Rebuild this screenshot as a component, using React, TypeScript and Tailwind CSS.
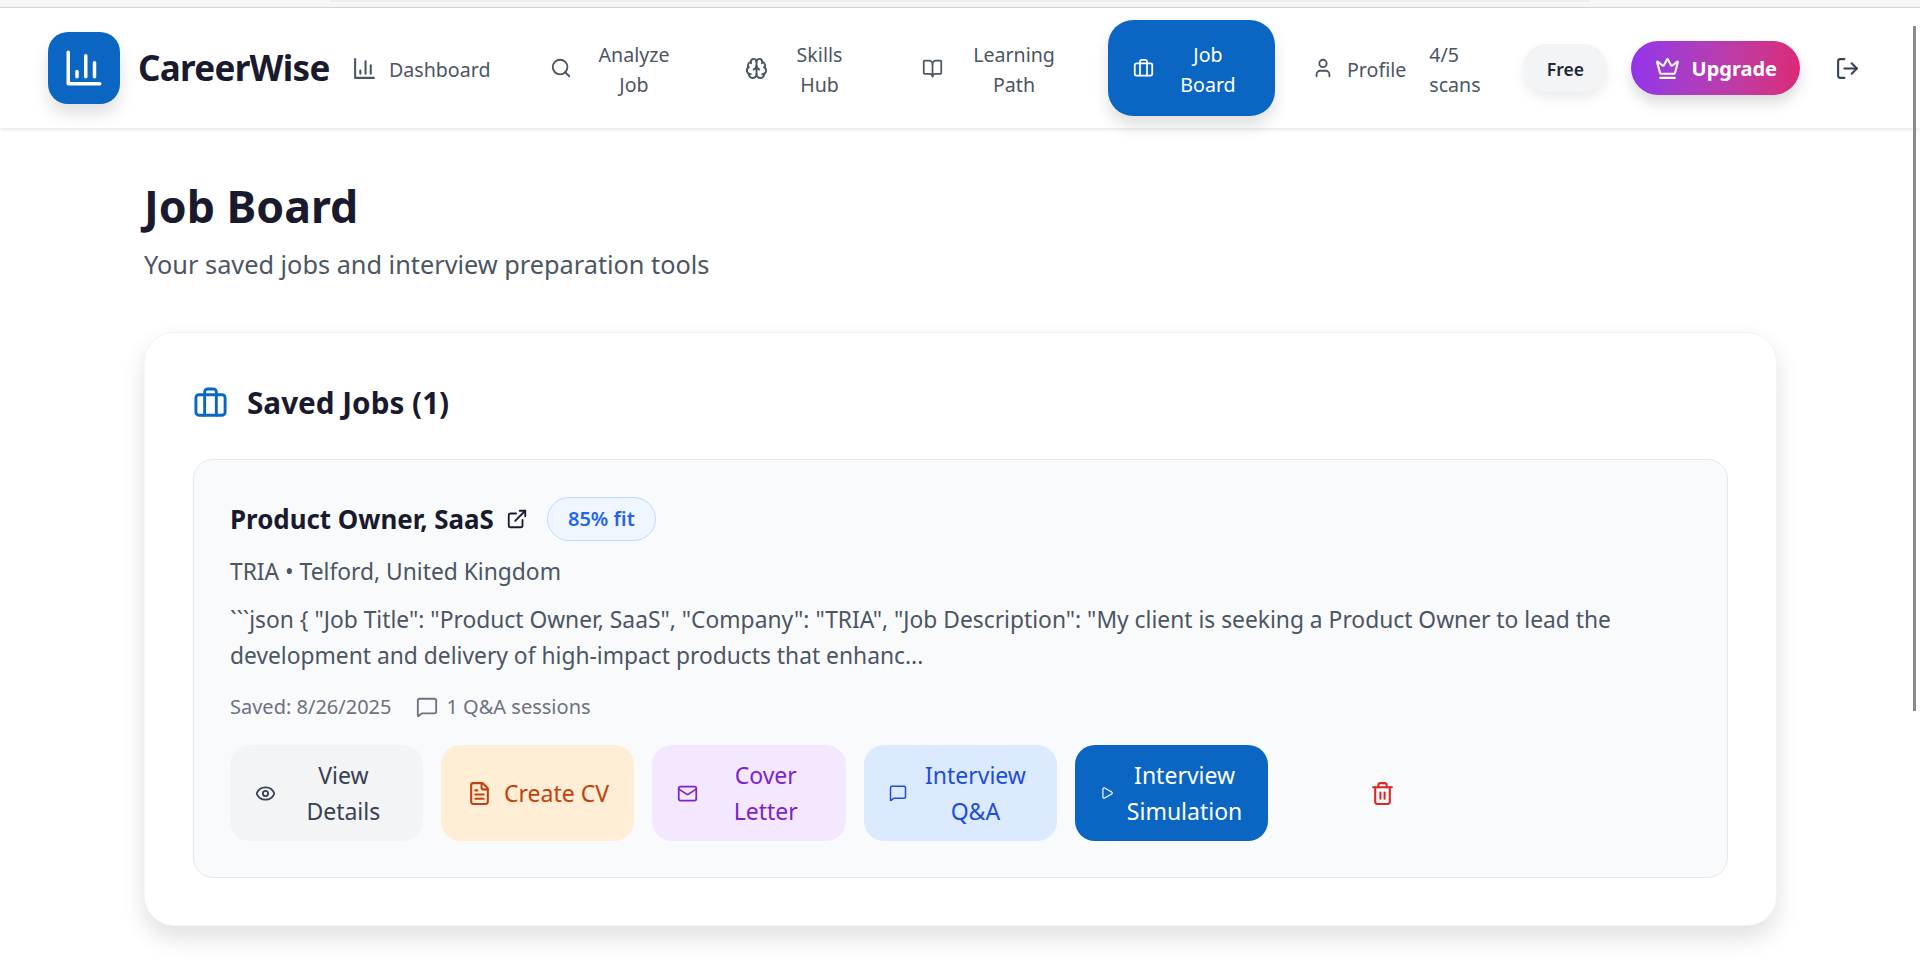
import {
  BookOpen,
  Brain,
  Briefcase,
  Crown,
  ExternalLink,
  Eye,
  FileText,
  LogOut,
  Mail,
  MessageSquare,
  Play,
  Search,
  Trash2,
  User,
} from "lucide-react";

// square-cornered chart, the package's own one has a rounded axis
function ChartIcon({ className }: { className: string }) {
  return (
    <svg viewBox="0 0 24 24" fill="none" stroke="currentColor" strokeWidth="2" strokeLinecap="round" strokeLinejoin="round" className={className}>
      <path d="M3 3v18h18" />
      <path d="M18 17V9" />
      <path d="M13 17V5" />
      <path d="M8 17v-3" />
    </svg>
  );
}

export default function App() {
  return (
    <div className="relative min-h-[970px] overflow-hidden bg-white font-['Noto_Sans',sans-serif] text-[#4b5563]">
      {/* Strip left over from the browser above the page */}
      <div className="h-[8px] border-b border-[#dcdcde] bg-[#f7f7f9]">
        <div className="ml-[330px] h-[2px] w-[1260px] bg-[#eeeef1]" />
      </div>

      {/* Header */}
      <header className="relative flex h-[120px] items-center bg-white pl-[48px] shadow-[0_1px_5px_rgba(0,0,0,0.12)]">
        <div className="flex h-[72px] w-[72px] shrink-0 items-center justify-center rounded-[20px] bg-[#0a66c2] shadow-[0_10px_16px_rgba(0,0,0,0.12)]">
          <ChartIcon className="h-[42px] w-[42px] text-white" />
        </div>
        <div className="ml-[18px] w-[191px] shrink-0 whitespace-nowrap text-[35px] font-bold tracking-[-0.7px] text-[#1a1a2e]">CareerWise</div>

        <nav className="flex items-center text-[19.6px] leading-[30px]">
          <a className="flex w-[197px] items-center pl-[22.5px]">
            <ChartIcon className="h-[25px] w-[25px]" />
            <span className="ml-[12.5px] whitespace-nowrap pt-[3px]">Dashboard</span>
          </a>
          <a className="flex w-[195px] items-center pl-[24px]">
            <Search className="h-[22px] w-[22px]" />
            <span className="ml-[17px] w-[90px] pt-[3px] text-center">Analyze Job</span>
          </a>
          <a className="flex w-[176px] items-center pl-[23.5px]">
            <Brain className="h-[23px] w-[23px]" />
            <span className="ml-[17px] w-[70px] pt-[3px] text-center">Skills Hub</span>
          </a>
          <a className="flex w-[211px] items-center pl-[25px]">
            <BookOpen className="h-[21px] w-[21px]" />
            <span className="ml-[26px] w-[90px] pt-[3px] text-center">Learning Path</span>
          </a>
          <a className="flex h-[96px] w-[167px] items-center rounded-[25px] bg-[#0a66c2] pl-[25px] text-white shadow-[0_10px_16px_rgba(0,0,0,0.12)]">
            <Briefcase className="h-[21px] w-[21px]" />
            <span className="ml-[24px] w-[60px] pt-[3px] text-center">Job Board</span>
          </a>
          <a className="ml-[37px] flex items-center">
            <User className="h-[22px] w-[22px]" />
            <span className="ml-[13px] whitespace-nowrap pt-[3px]">Profile</span>
          </a>
        </nav>

        <div className="ml-[23px] w-[60px] shrink-0 pt-[3px] text-[19.6px] leading-[30px]">4/5 scans</div>
        <div className="ml-[34px] flex h-[48px] w-[84px] shrink-0 items-center justify-center rounded-full bg-[#f3f4f6] pt-[2px] text-[17.5px] font-semibold text-[#1f2937] shadow-[0_6px_12px_rgba(0,0,0,0.08)]">Free</div>
        <button className="ml-[24px] flex h-[54px] w-[169px] shrink-0 items-center justify-center gap-[12px] rounded-full bg-gradient-to-r from-[#9333ea] to-[#db2777] text-[20px] font-bold text-white shadow-[0_8px_14px_rgba(0,0,0,0.14)]">
          <Crown className="h-[25px] w-[25px]" />
          <span className="pt-[2px]">Upgrade</span>
        </button>
        <LogOut className="ml-[35px] h-[25px] w-[25px] shrink-0 text-[#374151]" />
      </header>

      {/* Main */}
      <main className="pl-[144px] pr-[143px] pt-[47px]">
        <h1 className="text-[44.7px] font-bold leading-[62px] text-[#1a1a2e]">Job Board</h1>
        <p className="mt-[10px] text-[25.3px] leading-[35px] text-[#4b5563]">Your saved jobs and interview preparation tools</p>

        <section className="mt-[50px] rounded-[30px] border border-[#f3f4f6] bg-white px-[48px] pb-[47px] pt-[50px] shadow-[0_12px_24px_rgba(0,0,0,0.12)]">
          <h2 className="flex items-center gap-[19px] text-[29.7px] font-bold leading-[40px] text-[#1a1a2e]">
            <Briefcase className="h-[35px] w-[35px] text-[#0a66c2]" />
            Saved Jobs (1)
          </h2>

          <div className="mt-[36px] rounded-[20px] border border-[#e5e7eb] bg-[#f9fafb] px-[36px] pb-[36px] pt-[37px]">
            <div className="flex items-center">
              <h3 className="text-[25.9px] font-bold leading-[44px] text-[#1a1a2e]">Product Owner, SaaS</h3>
              <ExternalLink className="ml-[12px] h-[22px] w-[22px] text-[#1a1a2e]" />
              <span className="ml-[19px] flex h-[44px] w-[109px] items-center justify-center rounded-full border border-[#bfdbfe] bg-[#eff6ff] text-[20px] font-semibold text-[#2563eb]">85% fit</span>
            </div>
            <p className="mt-[13px] text-[22.8px] leading-[36px] text-[#4b5563]">TRIA • Telford, United Kingdom</p>
            <p className="mt-[12px] text-[22.8px] leading-[36px] text-[#4b5563]">
              ```json {"{"} "Job Title": "Product Owner, SaaS", "Company": "TRIA", "Job Description": "My client is seeking a Product Owner to lead the development and delivery of high-impact products that enhanc...
            </p>
            <div className="mt-[19px] flex items-center text-[20px] leading-[28px] text-[#6b7280]">
              <span>Saved: 8/26/2025</span>
              <MessageSquare className="ml-[25px] h-[22px] w-[22px]" />
              <span className="ml-[8px]">1 Q&amp;A sessions</span>
            </div>

            <div className="mt-[24px] flex gap-[18px] text-[23px] leading-[36px]">
              <button className="flex h-[96px] w-[193.2px] items-center justify-center gap-[12.5px] rounded-[20px] bg-[#f3f4f6] px-[25px] text-[#374151]">
                <Eye className="h-[21px] w-[21px] shrink-0" />
                <span>View Details</span>
              </button>
              <button className="flex h-[96px] w-[193.2px] items-center justify-center gap-[12.5px] rounded-[20px] bg-[#ffedd5] px-[25px] text-[#c2410c]">
                <FileText className="h-[25px] w-[25px] shrink-0" />
                <span className="whitespace-nowrap">Create CV</span>
              </button>
              <button className="flex h-[96px] w-[193.2px] items-center justify-center gap-[12.5px] rounded-[20px] bg-[#f3e8ff] px-[25px] text-[#7e22ce]">
                <Mail className="h-[21px] w-[21px] shrink-0" />
                <span>Cover Letter</span>
              </button>
              <button className="flex h-[96px] w-[193.2px] items-center justify-center gap-[12.5px] rounded-[20px] bg-[#dbeafe] px-[25px] text-[#1d4ed8]">
                <MessageSquare className="h-[18px] w-[18px] shrink-0" />
                <span>Interview Q&amp;A</span>
              </button>
              <button className="flex h-[96px] w-[193.2px] items-center justify-center gap-[12.5px] rounded-[20px] bg-[#0a66c2] px-[25px] text-white">
                <Play className="h-[14px] w-[14px] shrink-0" />
                <span>Interview Simulation</span>
              </button>
              <button className="flex h-[96px] w-[193.2px] items-center justify-center text-[#dc2626]">
                <Trash2 className="h-[25px] w-[25px]" />
              </button>
            </div>
          </div>
        </section>
      </main>

      {/* Page scrollbar */}
      <div className="absolute right-[4px] top-[26px] h-[685px] w-[3px] bg-[#8a8a8a]" />
    </div>
  );
}
